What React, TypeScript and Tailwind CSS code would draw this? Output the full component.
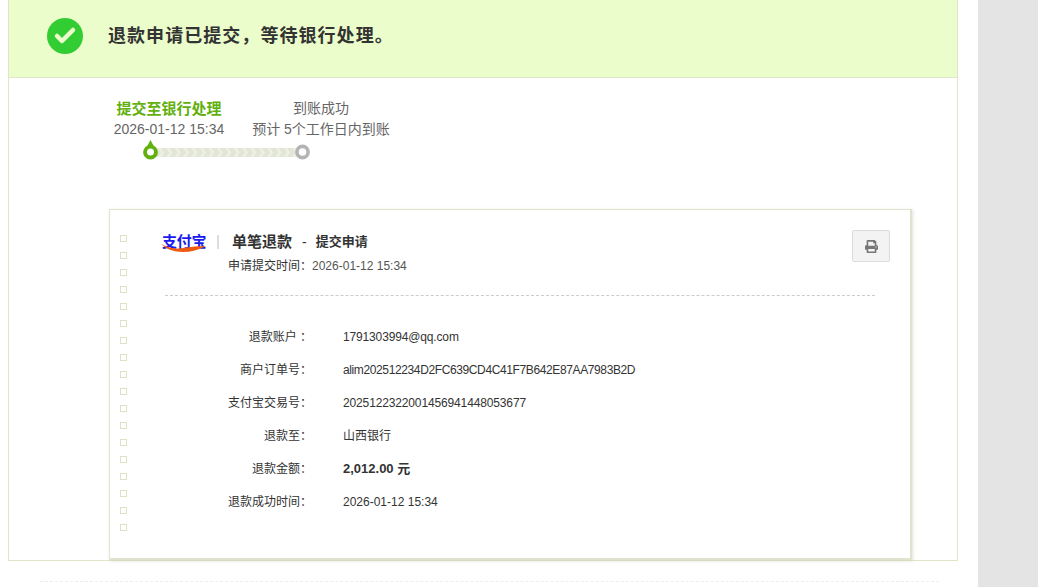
import React from "react";
import { Check } from "lucide-react";
import { FaPrint } from "react-icons/fa";

const font = { fontFamily: '"Liberation Sans", "Noto Sans CJK SC", sans-serif' };

const rows = [
  { label: "退款账户 ：", value: "1791303994@qq.com", cls: "tracking-[-0.15px]" },
  { label: "商户订单号：", value: "alim202512234D2FC639CD4C41F7B642E87AA7983B2D", cls: "tracking-[-0.38px]" },
  { label: "支付宝交易号：", value: "2025122322001456941448053677", cls: "tracking-[-0.14px]" },
  { label: "退款至：", value: "山西银行", cls: "" },
  { label: "退款金额：", value: "2,012.00 元", cls: "font-bold text-[13px]" },
  { label: "退款成功时间：", value: "2026-01-12 15:34", cls: "" },
];

const Track = () => (
  <svg width="170" height="22" viewBox="0 0 170 22" className="block">
    <rect x="8" y="8" width="152" height="9" fill="#e2e6d6" />
    {Array.from({ length: 17 }).map((_, i) => (
      <path key={i} d={`M${16 + i * 8.4} 8 h3 l3 4.5 l-3 4.5 h-3 l3 -4.5 z`} fill="#eef0e6" />
    ))}
    <path d="M8.5 0 L11.5 5.6 A7.3 7.3 0 1 1 5.5 5.6 Z" fill="#62b00d" />
    <circle cx="8.5" cy="12" r="3.5" fill="#fff" />
    <circle cx="160.5" cy="12" r="5.6" fill="#fff" stroke="#b4b4b4" strokeWidth="3.6" />
  </svg>
);

export default function App() {
  return (
    <div style={font} className="flex w-[1038px] h-[587px] overflow-hidden bg-white">
      <div className="w-[978px] shrink-0">
        <div className="ml-2 w-[950px] h-[561px] border-x border-b border-[#e2e4c8]">
          <div className="h-[78px] bg-[#ebfdca] border-b border-[#e0e6c8] flex items-center pl-[38px] pb-[5px]">
            <div className="w-9 h-9 rounded-full bg-[#32cd32] flex items-center justify-center">
              <Check size={24} strokeWidth={4.5} className="text-[#ecfccb]" />
            </div>
            <div className="ml-[25px] text-[18px] font-bold text-[#333] tracking-[1.05px] whitespace-nowrap">退款申请已提交，等待银行处理。</div>
          </div>

          <div className="pl-[84px] pt-5 h-[131px]">
            <div className="flex text-sm text-[#666] leading-[21px]">
              <div className="w-[152px] text-center">
                <div className="font-bold text-[15px] text-[#62b00d]">提交至银行处理</div>
                <div>2026-01-12 15:34</div>
              </div>
              <div className="w-[152px] text-center">
                <div>到账成功</div>
                <div>预计 5个工作日内到账</div>
              </div>
            </div>
            <div className="ml-[49px]">
              <Track />
            </div>
          </div>

          <div className="ml-[100px] w-[803px] h-[351px] bg-white border border-[#e2e3cf] border-r-2 border-b-2 shadow-[1px_1px_3px_rgba(200,200,180,0.5)] flex">
            <div className="pl-[10px] pt-[25px] flex flex-col gap-[10px] w-[50px] shrink-0">
              {Array.from({ length: 18 }).map((_, i) => (
                <div key={i} className="w-[7px] h-[7px] border border-[#dfe0c4]" />
              ))}
            </div>
            <div className="flex-1 min-w-0">
              <div className="flex justify-between pr-5 pt-5">
                <div>
                  <div className="flex items-center h-6">
                    <div className="relative w-[47px] h-5 ml-[1px]">
                      <span className="absolute left-[1px] top-0 text-[15px] leading-5 tracking-[-0.3px] font-bold text-[#1a1aef]">支付宝</span>
                      <svg width="47" height="20" viewBox="0 0 47 20" className="absolute left-0 top-0">
                        <path d="M0 12 Q12 18 22 16 Q34 14 45 14 Q34 20 22 20 Q8 20 0 12Z" fill="#f05a10" />
                      </svg>
                    </div>
                    <div className="ml-[9px] w-[2px] h-[14px] bg-[#ddd]" />
                    <div className="ml-[13px] text-[15px] font-bold text-[#333]">单笔退款</div>
                    <div className="ml-[10px] mr-[9px] text-sm text-[#333]">-</div>
                    <div className="text-[13px] font-bold text-[#333]">提交申请</div>
                  </div>
                  <div className="mt-[2px] ml-[68px] text-xs leading-[20px] text-[#333] whitespace-nowrap">
                    申请提交时间：<span className="text-[#555]">2026-01-12 15:34</span>
                  </div>
                </div>
                <div className="w-[38px] h-8 bg-[#f3f3f3] border border-[#dcdcdc] rounded-[2px] flex items-center justify-center">
                  <FaPrint size={13} className="text-[#777]" />
                </div>
              </div>
              <div className="mt-[19px] mr-[35px] ml-[5px] border-t border-dashed border-[#ccc]" />
              <div className="pt-[24px] text-xs text-[#333]">
                {rows.map((r) => (
                  <div key={r.label} className="flex h-[33px] items-center">
                    <div className="w-[152px] text-right whitespace-nowrap">{r.label}</div>
                    <div className={`ml-[31px] ${r.cls}`}>{r.value}</div>
                  </div>
                ))}
              </div>
            </div>
          </div>
        </div>
        <div className="mt-5 ml-10 w-[899px] border-t border-dashed border-[#eeeeee]" />
      </div>
      <div className="flex-1 bg-[#e4e4e4]" />
    </div>
  );
}
